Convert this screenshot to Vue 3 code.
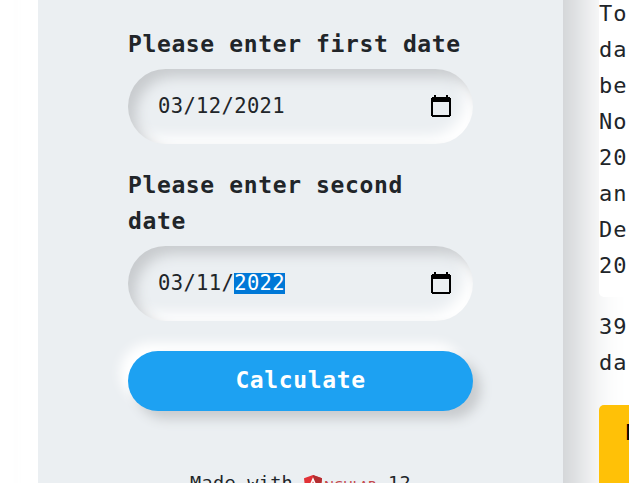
<script setup>
const fields = [
  { label: 'Please enter first date', prefix: '03/12/2021', active: '' },
  { label: 'Please enter second date', prefix: '03/11/', active: '2022' },
]
const totals = ['To', 'da', 'be', 'No', '20', 'an', 'De', '20']
</script>

<template>
  <div class="page">
    <main class="panel">
      <form class="form" @submit.prevent>
        <div v-for="f in fields" :key="f.label" class="field">
          <label class="label">{{ f.label }}</label>
          <div class="date">
            <span class="value">{{ f.prefix }}<mark v-if="f.active">{{ f.active }}</mark></span>
            <svg class="calendar" viewBox="0 0 20 22" shape-rendering="crispEdges">
              <path d="M3 0h2v2h10V0h2v2h2v1h1v18h-1v1H1v-1H0V3h1V2h2zM2 7v13h16V7z" fill="#000" fill-rule="evenodd" />
            </svg>
          </div>
        </div>
        <button class="submit">Calculate</button>
      </form>
      <footer class="footer">
        <span>Made with</span>
        <svg class="logo" viewBox="0 0 73 20">
          <path d="M9 0 18 3.2 16.6 15.5 9 20 1.4 15.5 0 3.2z" fill="#e23237" />
          <path d="M9 0 18 3.2 16.6 15.5 9 20z" fill="#b52e31" />
          <path d="M9 2.3 3.4 14.8h2.1l1.1-2.8h4.8l1.1 2.8h2.1zM9 6.3l1.7 4H7.3z" fill="#fff" fill-rule="evenodd" />
          <text x="20" y="14.6" textLength="52" lengthAdjust="spacingAndGlyphs">NGULAR</text>
        </svg>
        <span>12</span>
      </footer>
    </main>
    <aside class="results">
      <div class="summary">
        <div v-for="(line, i) in totals" :key="i">{{ line }}</div>
      </div>
      <div class="days"><div>39</div><div>da</div></div>
      <div class="action">M</div>
    </aside>
  </div>
</template>

<style>
body {
  background: #fff;
  overflow: hidden;
}
</style>

<style scoped>
* {
  box-sizing: border-box;
}
.page {
  display: flex;
  width: 629px;
  height: 483px;
  padding-left: 38px;
  overflow: hidden;
  color: #212529;
  font-family: "DejaVu Sans Mono", "Liberation Mono", monospace;
  font-size: 22px;
  line-height: 36px;
}
.panel {
  flex: 0 0 525px;
  height: 620px;
  padding: 26px 90px 0;
  background: #ebeff2;
  box-shadow: -20px -60px 14px #fff, 18px -60px 40px #cbced1;
}
.field {
  margin-bottom: 23px;
}
.field:last-of-type {
  margin-bottom: 30px;
}
.label {
  display: block;
  margin-bottom: 7px;
  font-size: 23px;
  font-weight: bold;
  letter-spacing: 0.62px;
}
.date {
  display: flex;
  align-items: center;
  justify-content: space-between;
  height: 75px;
  padding: 0 22px 0 30px;
  border-radius: 38px;
  box-shadow: inset 8px 8px 13px #c8cbce, inset -8px -8px 13px #fff;
}
.value {
  font-size: 20.5px;
  line-height: 21px;
  letter-spacing: 0.36px;
}
.value mark {
  display: inline-block;
  height: 21px;
  background: #0078d7;
  color: #fff;
}
.calendar {
  width: 20px;
  height: 22px;
  margin-bottom: 1px;
}
.submit {
  display: block;
  width: 345px;
  height: 60px;
  padding: 0 0 2px;
  border: 0;
  border-radius: 30px;
  background: #1da1f2;
  box-shadow: 8px 8px 12px #c8cbce, -8px -8px 12px #fff;
  color: #fff;
  font-family: inherit;
  font-size: 23px;
  font-weight: bold;
  letter-spacing: 0.62px;
}
.footer {
  display: flex;
  align-items: flex-start;
  justify-content: center;
  gap: 11px;
  height: 36px;
  margin-top: 54px;
  font-size: 18.5px;
  letter-spacing: 0.3px;
}
.logo {
  width: 73px;
  height: 20px;
  margin-top: 10px;
}
.logo text {
  fill: #c4474b;
  font: 500 13px "Noto Sans", sans-serif;
  letter-spacing: 0;
}
.results {
  position: relative;
  flex: 0 0 220px;
  margin-left: 36px;
  letter-spacing: 1.1px;
}
.summary {
  height: 297px;
  padding-top: 12px;
  border-bottom-left-radius: 5px;
  background: #fff;
}
.summary div:first-child {
  margin-top: -16px;
}
.days {
  margin-top: 12px;
}
.action {
  height: 90px;
  margin-top: 24px;
  padding: 10px 27px;
  border-radius: 5px;
  background: #ffc107;
  color: #000;
}
</style>
